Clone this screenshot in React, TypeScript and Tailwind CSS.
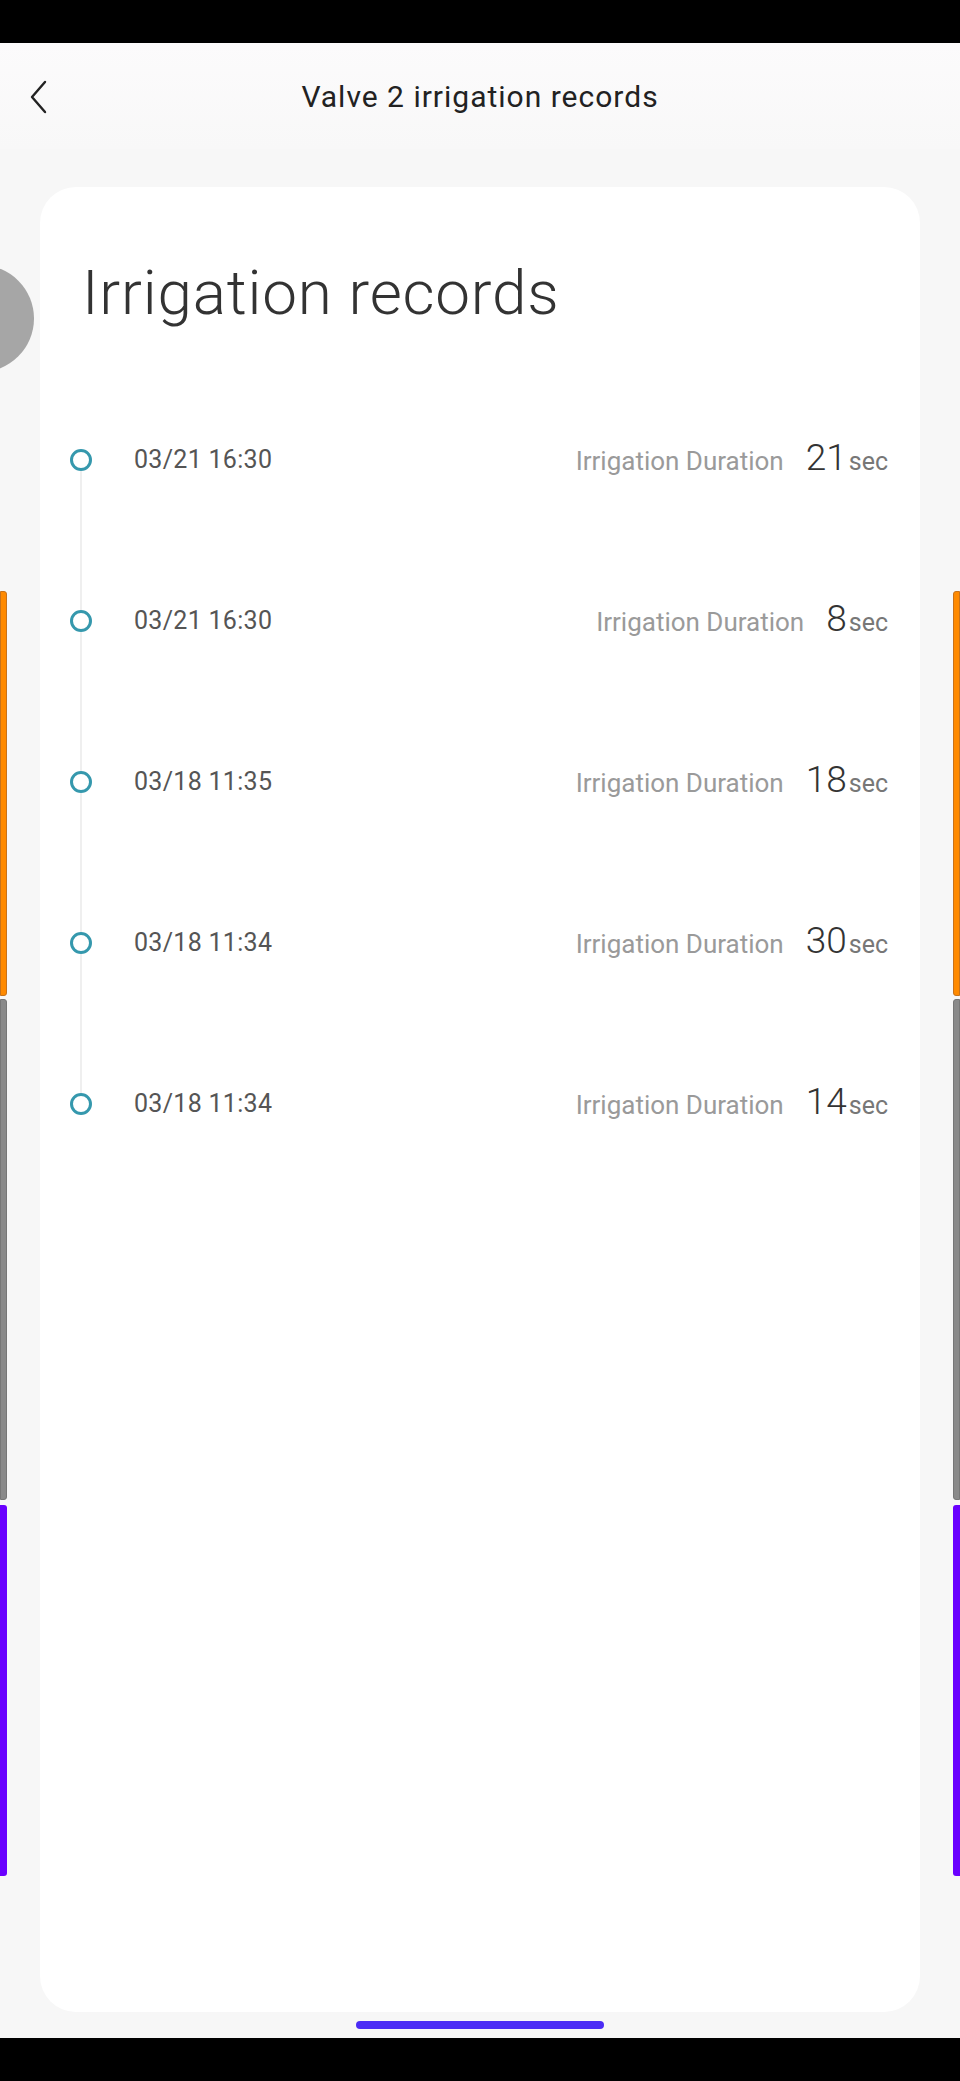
import React from 'react';

const records = [
  { time: '03/21 16:30', duration: 21 },
  { time: '03/21 16:30', duration: 8 },
  { time: '03/18 11:35', duration: 18 },
  { time: '03/18 11:34', duration: 30 },
  { time: '03/18 11:34', duration: 14 },
];

const EdgeBars: React.FC<{ side: 'left' | 'right' }> = ({ side }) => {
  const pos = side === 'left' ? 'left-0 rounded-r-[3px]' : 'right-0 rounded-l-[3px]';
  return (
    <>
      <div className={`absolute top-[591px] h-[405px] w-[7px] bg-[#ff8a00] border border-[#c8721a] ${pos}`} />
      <div className={`absolute top-[999px] h-[501px] w-[7px] bg-[#8a8a8a] border border-[#777] ${pos}`} />
      <div className={`absolute top-[1505px] h-[371px] w-[7px] bg-[#6a00ff] ${pos}`} />
    </>
  );
};

const App: React.FC = () => {
  return (
    <div
      className="relative w-[960px] h-[2081px] overflow-hidden bg-[#f7f7f7] flex flex-col"
      style={{ fontFamily: 'Roboto, "Noto Sans", sans-serif' }}
    >
      {/* status bar */}
      <div className="h-[43px] bg-black shrink-0" />

      {/* header */}
      <div className="relative h-[106px] shrink-0 flex items-center justify-center bg-gradient-to-b from-[#fcfbfc] to-[#f8f8f8]">
        <button className="absolute left-[26px] top-[36px] w-[24px] h-[36px] flex items-center justify-center">
          <svg width="18" height="34" viewBox="0 0 18 34" fill="none">
            <path d="M16 2 L3 17 L16 32" stroke="#222" strokeWidth="2.4" strokeLinecap="round" strokeLinejoin="round" />
          </svg>
        </button>
        <h1 className="text-[30px] text-[#222] tracking-[1px]">Valve 2 irrigation records</h1>
      </div>

      {/* card */}
      <div className="mt-[38px] mx-[40px] h-[1825px] bg-white rounded-[36px] flex flex-col">
        <h2 className="mt-[66px] ml-[42px] text-[62px] leading-[80px] font-light text-[#333] tracking-[0.8px]">
          Irrigation records
        </h2>

        <div className="mt-[116px] pl-[30px] pr-[32px] flex flex-col">
          {records.map((r, i) => {
            const last = i === records.length - 1;
            return (
              <div key={i} className={`flex ${last ? '' : 'h-[161px]'}`}>
                <div className="w-[22px] flex flex-col items-center">
                  <div className="w-[22px] h-[22px] rounded-full border-[3.5px] border-[#3598ad]" />
                  {!last && <div className="flex-1 w-[2px] bg-[#efefef]" />}
                </div>
                <div className="flex-1 h-[22px] flex items-center justify-between pl-[42px]">
                  <span className="text-[25px] text-[#555] tracking-[0.3px]">{r.time}</span>
                  <div className="flex items-baseline">
                    <span className="text-[26px] text-[#9a9a9a] mr-[22px]">Irrigation Duration</span>
                    <span className="text-[37px] leading-none font-light text-[#333]">{r.duration}</span>
                    <span className="text-[25px] text-[#777] ml-[2px]">sec</span>
                  </div>
                </div>
              </div>
            );
          })}
        </div>
      </div>

      {/* home indicator */}
      <div className="h-[26px] shrink-0 flex items-center justify-center">
        <div className="w-[248px] h-[8px] rounded-full bg-[#4b2cf5]" />
      </div>
      <div className="flex-1 bg-black" />

      {/* edge overlays */}
      <div className="absolute left-[-73px] top-[265px] w-[107px] h-[107px] rounded-full bg-[#a6a6a6]" />
      <EdgeBars side="left" />
      <EdgeBars side="right" />
    </div>
  );
};

export default App;
